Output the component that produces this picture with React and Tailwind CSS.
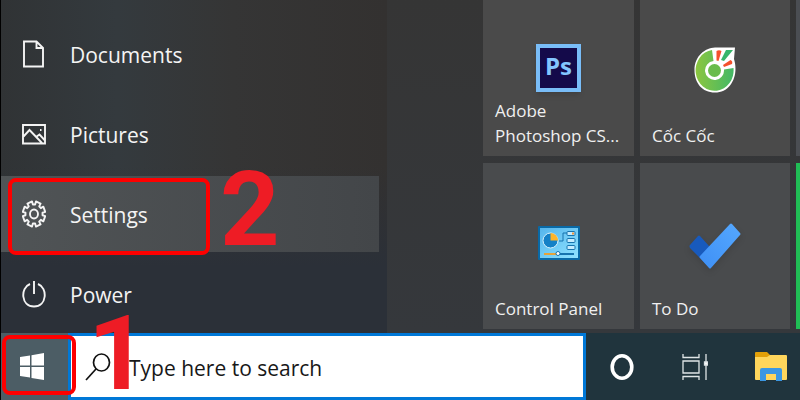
import React from 'react';

const GEAR_POINTS = Array.from({ length: 8 }, (_, i) => {
    const base = (i * 45 + 22.5) * Math.PI / 180;
    return [[-0.26, 8.6], [-0.22, 11.4], [0.22, 11.4], [0.26, 8.6]].map(([offset, r]) => {
        const angle = base + offset;
        return `${(12 + r * Math.cos(angle)).toFixed(2)},${(14 + r * 1.12 * Math.sin(angle)).toFixed(2)}`;
    }).join(' ');
}).join(' ');

const MenuIcon = ({ children }) => (
    <svg viewBox="0 0 24 28" className="h-7 w-6 shrink-0" fill="none" stroke="#f4f4f4" strokeWidth="1.9">
        {children}
    </svg>
);

const menuItems = [
    {
        label: 'Documents',
        icon: <MenuIcon><path d="M2 1.500H14.500L21 8V26.500H2ZM14.500 1.500V8H21" /></MenuIcon>,
    },
    {
        label: 'Pictures',
        icon: (
            <MenuIcon>
                <path d="M1 5H23V23.500H1ZM1.500 16.500L7.500 10L20 23M14 17L17.500 14.500L23 20.500" />
                <path d="M18 10H19.500" />
            </MenuIcon>
        ),
    },
    {
        label: 'Settings',
        active: true,
        icon: (
            <MenuIcon>
                <polygon points={GEAR_POINTS} strokeLinejoin="round" />
                <ellipse cx="12" cy="14" rx="4" ry="4.500" />
            </MenuIcon>
        ),
    },
    {
        label: 'Power',
        icon: <MenuIcon><path d="M12 1V14M8 4C-2 8 -1 26.500 12 26.500S26 8 16 4" /></MenuIcon>,
    },
];

const StepNumber = ({ value, className }) => (
    <span className={`absolute z-10 font-['Roboto',sans-serif] text-[104px] leading-[80px] font-bold text-[#ee1c25] ${className}`}>
        {value}
    </span>
);

const PhotoshopIcon = () => (
    <div className="flex h-12 w-[45px] items-center justify-center border-4 border-[#79bdf8] bg-[#140a4a] pb-1 font-['Open_Sans',sans-serif] text-2xl font-bold text-[#83c5ff] shadow-md">
        Ps
    </div>
);

const CocCocIcon = () => (
    <svg viewBox="0 0 42 46" className="h-[46px] w-[42px]">
        <defs>
            <linearGradient id="coccoc" x1="0" y1="0" x2="1" y2="0">
                <stop offset="0" stopColor="#8cc63f" />
                <stop offset="1" stopColor="#43b866" />
            </linearGradient>
        </defs>
        <path d="M41 0.500L40 12C45 28 37 45.500 21 45.500C8 45.500 0.500 36 0.500 23C0.500 9 11 1 21 0.500Z" fill="#fff" />
        <path d="M18 3A19 20.500 0 1 0 39.500 21L30 22.500A9.500 9.500 0 1 1 19.500 14Z" fill="url(#coccoc)" />
        <circle cx="20.500" cy="23.500" r="6.500" fill="#6abc4c" />
        <path d="M22.500 4Q25 2.500 27.500 4L24.500 14L22.500 13.500Z" fill="#f4512c" />
        <path d="M32 3H39L30 14L27 13Z" fill="#36b56a" />
        <path d="M36.500 13Q39 14 38 17L30 20L29 18Z" fill="#f4512c" />
    </svg>
);

const ControlPanelIcon = () => (
    <svg viewBox="0 0 42 34" className="h-[34px] w-[42px]">
        <defs>
            <linearGradient id="panel" x1="0" y1="0" x2="1" y2="1">
                <stop offset="0" stopColor="#55b5ec" />
                <stop offset="1" stopColor="#8ee2ff" />
            </linearGradient>
        </defs>
        <rect width="42" height="34" rx="1" fill="#0969a6" />
        <rect x="2" y="2" width="38" height="30" fill="url(#panel)" />
        <circle cx="12.500" cy="14.500" r="7.500" fill="#1480c6" stroke="#d8f1fc" />
        <path d="M12.500 14.500V7A7.500 7.500 0 0 1 20 14.500Z" fill="#ffb52b" />
        <path d="M21 15H25V7H29" fill="none" stroke="#1673ae" />
        <g fill="#c4ecff" stroke="#1673ae">
            <rect x="29" y="5.500" width="8" height="4" rx="1" />
            <rect x="29" y="12.500" width="8" height="4" rx="1" />
            <rect x="29" y="19.500" width="8" height="4" rx="1" />
        </g>
        <path d="M34 7.500H36" stroke="#f2953b" strokeWidth="2" />
        <path d="M6 28H19" stroke="#e6a33a" strokeWidth="2" />
        <path d="M21 28H36" stroke="#1673ae" strokeWidth="2" />
        <circle cx="20" cy="27.500" r="2" fill="#fff" stroke="#1673ae" />
    </svg>
);

const ToDoIcon = () => (
    <svg viewBox="0 0 52 46" className="h-[46px] w-[52px] drop-shadow-md">
        <defs>
            <linearGradient id="todo" x1="0" y1="1" x2="1" y2="0">
                <stop offset="0" stopColor="#3e8ff5" />
                <stop offset="1" stopColor="#55a8ff" />
            </linearGradient>
        </defs>
        <path d="M9 13Q10 12 11 13L29 33L21 45L1 25Q0 23 1 22Z" fill="#185abd" />
        <path d="M41 1Q42 0 43 1L51 10Q52 11 51 12L22 45Q21 46 20 45L11 35Q10 34 11 33Z" fill="url(#todo)" />
    </svg>
);

const Tile = ({ label, icon, className }) => (
    <button className={`flex w-full flex-col items-start justify-between px-3 pb-2 text-left font-['Open_Sans',sans-serif] text-[17px] leading-[25px] text-[#f0f0f0] ${className}`}>
        <span className="self-center">{icon}</span>
        <span className="whitespace-nowrap">{label}</span>
    </button>
);

const StartMenu = () => (
    <main className="flex flex-1 overflow-hidden">
        <nav className="flex w-[386px] shrink-0 flex-col gap-1 bg-[linear-gradient(180deg,transparent_50%,#2b3038_80%),linear-gradient(90deg,#303335_0%,#343a3e_30%,#353535_60%,#333130_100%)] pt-4 pr-2">
            {menuItems.map((item) => (
                <button
                    key={item.label}
                    className={`relative flex h-[76px] items-center gap-6 pl-[21px] text-left font-['Open_Sans',sans-serif] text-[21px] text-[#f4f4f4] ${item.active ? 'bg-linear-to-r from-[#505456] to-[#434649]' : ''}`}
                >
                    {item.icon}
                    <span className="pt-1">{item.label}</span>
                    {item.active && (
                        <>
                            <span className="absolute top-[2px] left-[7px] h-[77px] w-[202px] rounded-lg border-4 border-[#fe0000]" />
                            <StepNumber value="2" className="-top-[6px] left-[219px]" />
                        </>
                    )}
                </button>
            ))}
        </nav>
        <section className="flex min-w-0 flex-1 flex-col justify-end bg-linear-to-b from-[#353535] to-[#35383c] pb-1 pl-24">
            <div className="grid grid-cols-[151px_150px_1fr] gap-x-[6px] gap-y-[7px]">
                <Tile label={<>Adobe<br />Photoshop CS...</>} icon={<PhotoshopIcon />} className="h-[156px] bg-[#4a4a4a] pt-11" />
                <Tile label="Cốc Cốc" icon={<CocCocIcon />} className="h-[156px] bg-[#4a4a4a] pt-[47px]" />
                <div className="bg-[#4b4e53]" />
                <Tile label="Control Panel" icon={<ControlPanelIcon />} className="h-[166px] bg-[#494b4d] pt-[63px]" />
                <Tile label="To Do" icon={<ToDoIcon />} className="h-[166px] bg-[#494b4d] pt-[60px]" />
                <div className="bg-[#20bd55]" />
            </div>
        </section>
    </main>
);

const Taskbar = () => (
    <footer className="flex h-[67px] shrink-0 bg-[#20343d]">
        <button className="relative flex w-[67px] items-center justify-start bg-[#4c5d65] pl-[19px]">
            <svg viewBox="0 0 24 27" className="h-[27px] w-6" fill="#fff">
                <path d="M0 4L10 2.500V12.500H0ZM11.500 2.200L24 0V12.500H11.500ZM0 14H10V24.500L0 23ZM11.500 14H24V27L11.500 25Z" />
            </svg>
            <span className="absolute top-[2px] left-px z-10 h-[60px] w-[74px] rounded-lg border-4 border-[#fe0000]" />
            <StepNumber value="1" className="-top-[19px] left-[87px]" />
        </button>
        <label className="flex w-[518px] items-center gap-[18px] border-[3px] border-[#0078d7] bg-white pl-[14px]">
            <svg viewBox="0 0 26 28" className="h-7 w-[26px] shrink-0" fill="none" stroke="#111" strokeWidth="1.700">
                <ellipse cx="16.500" cy="9.500" rx="8" ry="8.500" />
                <path d="M11 16L1 27" />
            </svg>
            <input
                type="text"
                placeholder="Type here to search"
                className="min-w-0 flex-1 pt-1 font-['Open_Sans',sans-serif] text-[21px] text-[#181818] outline-none placeholder:text-[#181818]"
            />
        </label>
        <div className="flex flex-1 items-center justify-between pr-[13px] pl-6">
            <button>
                <svg viewBox="0 0 24 28" className="h-7 w-6" fill="none" stroke="#fff" strokeWidth="3.600">
                    <ellipse cx="12" cy="14" rx="9.800" ry="11.200" />
                </svg>
            </button>
            <button>
                <svg viewBox="0 0 26 28" className="h-7 w-[26px]" fill="none" stroke="#dfe5e7" strokeWidth="1.300">
                    <path d="M1 1V4.500H17V1M1 8H17V20H1ZM1 27V23.500H17V27M24 1V27" />
                    <path d="M22.500 9H25.500V12H22.500Z" fill="#fff" />
                </svg>
            </button>
            <button>
                <svg viewBox="0 0 32 30" className="h-[30px] w-8">
                    <path d="M0 1Q0 0 1 0H12L15 3V8H0Z" fill="#e3a008" />
                    <path d="M0 5H12L15 3H31Q32 3 32 4V27Q32 28 31 28H1Q0 28 0 27Z" fill="#ffd65c" />
                    <path d="M5 29V18Q5 16 7 16H25Q27 16 27 18V29H21V22H11V29Z" fill="#3b97e3" />
                </svg>
            </button>
        </div>
    </footer>
);

const App = () => (
    <div className="flex min-h-screen flex-col overflow-hidden border-l border-black bg-[#303131]">
        <StartMenu />
        <Taskbar />
    </div>
);

export default App;
